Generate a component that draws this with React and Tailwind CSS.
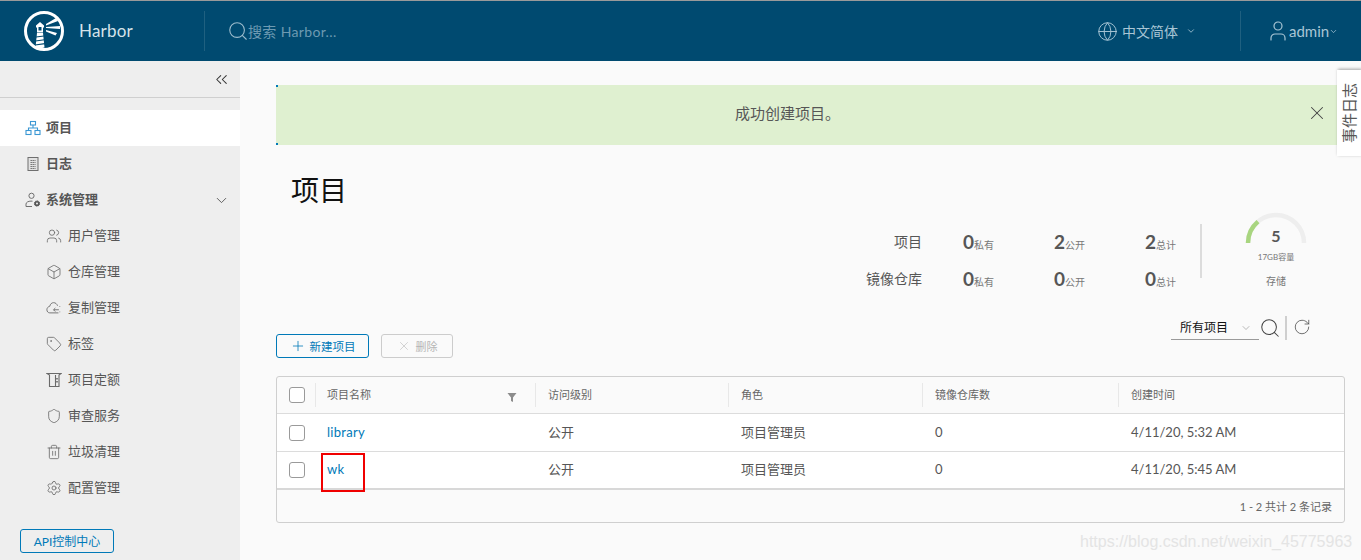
import { Users, Box, Tag, Shield, Trash2, Settings, Globe, User, Search, RotateCw, Plus, X, ChevronDown, ChevronsLeft } from 'lucide-react';

const FONT = "font-['Lato','Noto_Sans_CJK_SC',sans-serif]";

const HarborLogo = () => (
  <svg width="40" height="40" viewBox="0 0 40 40">
    <circle cx="20" cy="20" r="18.5" fill="none" stroke="#fff" strokeWidth="3" />
    <path d="M12 14.5l4-3.5 4 3.5v2h-1v5h-6v-5h-1z" fill="#fff" />
    <rect x="14.5" y="16" width="3" height="3.5" fill="#004a70" />
    <path d="M13 22h6l1.5 14.5-4.5 1-4.5-1z" fill="#fff" />
    <path d="M12 26l8-1M11.5 30l9-1.2M11 34l10-1.4" stroke="#004a70" strokeWidth="1.1" />
    <path d="M22 13l10-6 2 3-12 4.5zM22 16l14-1v3l-14-1zM22 19l11 3-1.5 2.5-9.5-4z" fill="#fff" />
  </svg>
);

const NetworkIcon = () => (
  <svg width="16" height="16" viewBox="0 0 16 16" fill="none" stroke="#3b97d3" strokeWidth="1.1">
    <rect x="5.5" y="1.5" width="5" height="3.5" />
    <rect x="1" y="10.5" width="5" height="4" />
    <rect x="10" y="10.5" width="5" height="4" />
    <path d="M8 5v3M3.5 10.5V8h9v2.5" />
  </svg>
);

const LogIcon = () => (
  <svg width="16" height="16" viewBox="0 0 16 16" fill="none" stroke="#6f6f6f">
    <rect x="3" y="1.5" width="10" height="13" fill="#e2e2e2" />
    <path d="M5.5 4.5h5M5.5 6.5h5M5.5 8.5h5M5.5 10.5h5M5.5 12.5h5" strokeDasharray="1.4 .6" />
  </svg>
);

const AdminIcon = () => (
  <svg width="16" height="16" viewBox="0 0 16 16" fill="none" stroke="#6f6f6f" strokeWidth="1">
    <circle cx="6.5" cy="3.8" r="2.6" />
    <path d="M1 14.5v-2.4c0-1.8 2.4-3 5-3 .6 0 1 0 1.5.1M1 14.5h6" />
    <circle cx="12" cy="11.5" r="2.6" fill="#555" stroke="#555" strokeDasharray="1.4 .6" />
    <circle cx="12" cy="11.5" r="1" fill="#eee" stroke="none" />
  </svg>
);

const CloudIcon = () => (
  <svg width="18" height="16" viewBox="0 0 18 16" fill="none" stroke="#6a6a6a" strokeWidth="1">
    <path d="M13 5.5C12.3 3.4 10.6 2 8.6 2 6.4 2 4.6 3.7 4.3 6 2.4 6.4 1 8 1 10c0 2 1.4 3.5 3.3 3.5H14" />
    <path d="M14.5 10H8.5M10.5 8L8.5 10l2 2M15.5 6v.8M15.5 12v.8" />
  </svg>
);

const QuotaIcon = () => (
  <svg width="16" height="16" viewBox="0 0 16 16" fill="none" stroke="#6a6a6a" strokeWidth="1.1">
    <path d="M1 1.5h14l-2 1.5v11.5H3.5V3z" />
    <path d="M9.5 3v11.5" />
    <path d="M11 6v1.5M11 9v1.5" strokeWidth="1.6" />
  </svg>
);

const thin = { strokeWidth: 1.25, color: '#6a6a6a' };

const subItems = [
  ['用户管理', <Users size={16} {...thin} />],
  ['仓库管理', <Box size={16} {...thin} />],
  ['复制管理', <CloudIcon />],
  ['标签', <Tag size={16} {...thin} />],
  ['项目定额', <QuotaIcon />],
  ['审查服务', <Shield size={16} {...thin} />],
  ['垃圾清理', <Trash2 size={16} {...thin} />],
  ['配置管理', <Settings size={16} {...thin} />],
];

const Stat = ({ value, label }) => (
  <span className="flex items-baseline w-[91px] text-[#565656]">
    <span className="text-[19px] leading-none font-bold">{value}</span>
    <span className="text-[10px] leading-none text-[#777]">{label}</span>
  </span>
);

const StatRow = ({ title, values }) => (
  <div className="flex items-center h-[37px]">
    <span className="w-[91px] text-right text-[14px] text-[#565656] mr-[41px]">{title}</span>
    <Stat value={values[0]} label="私有" />
    <Stat value={values[1]} label="公开" />
    <span className="w-[54px]"><Stat value={values[2]} label="总计" /></span>
  </div>
);

const rowGrid = 'grid grid-cols-[38px_220px_193px_194px_196px_1fr] items-center';

const Checkbox = () => (
  <span className="block ml-[12px] w-4 h-4 rounded-[3px] border border-[#9a9a9a] bg-white" />
);

const HeadCell = ({ children, extra }) => (
  <div className="flex items-center justify-between h-[24px] border-l border-[#e8e8e8] pl-[12px] pr-[18px] text-[11px] text-[#666]">
    {children}
    {extra}
  </div>
);

const Row = ({ name, time, border }) => (
  <div className={`${rowGrid} h-[38px] bg-white text-[13px] text-[#565656] ${border}`}>
    <Checkbox />
    <a className="pl-[12px] text-[#0079b8] tracking-[0.3px]">{name}</a>
    <span className="pl-[13px]">公开</span>
    <span className="pl-[13px]">项目管理员</span>
    <span className="pl-[13px]">0</span>
    <span className="pl-[13px]">{time}</span>
  </div>
);

export default function App() {
  return (
    <div className={`relative w-[1361px] h-[560px] overflow-hidden flex flex-col bg-[#fafafa] ${FONT}`}>
      <header className="flex items-center h-[61px] shrink-0 bg-[#004a70] border-t border-[#9a9a9a]">
        <div className="flex items-center w-[205px] h-[40px] pl-[24px] border-r border-[#1f6080]">
          <HarborLogo />
          <span className="ml-[15px] text-[17px] tracking-[0.2px] text-[#d5e3ea]">Harbor</span>
        </div>
        <div className="flex items-center ml-[22px] flex-1 text-[14px] tracking-[0.35px] text-[#6d9ab2]">
          <Search size={22} strokeWidth={1.2} className="-mr-[1px] text-[#9cbccd]" />
          <span>搜索 Harbor...</span>
        </div>
        <div className="flex items-center text-[14px] text-[#a9c6d5] h-[40px] mr-[44px]">
          <Globe size={21} strokeWidth={1.1} />
          <span className="ml-[4px]">中文简体</span>
          <ChevronDown size={10} className="ml-[8px]" />
        </div>
        <div className="flex items-center h-[40px] w-[121px] pl-[25px] border-l border-[#1f6080] text-[15px] text-[#a9c6d5]">
          <User size={24} strokeWidth={1.2} />
          <span className="-ml-[1px]">admin</span>
          <ChevronDown size={9} />
        </div>
      </header>

      <div className="flex flex-1 min-h-0">
        <aside className="w-[240px] shrink-0 bg-[#eeeeee] flex flex-col">
          <div className="flex items-center justify-end h-[37px] pr-[9px] border-b border-[#cfcfcf] text-[#333] shrink-0">
            <ChevronsLeft size={19} strokeWidth={1.3} />
          </div>
          <nav className="mt-[12px] flex flex-col text-[13px] text-[#565656]">
            <div className="flex items-center h-[36px] pl-[25px] gap-[5px] bg-white font-bold">
              <NetworkIcon />项目
            </div>
            <div className="flex items-center h-[36px] pl-[25px] gap-[5px] font-bold">
              <LogIcon />日志
            </div>
            <div className="flex items-center h-[36px] pl-[25px] pr-[10px] gap-[5px] font-bold">
              <AdminIcon />系统管理
              <ChevronDown size={17} strokeWidth={1.3} className="ml-auto" />
            </div>
            {subItems.map(([label, icon]) => (
              <div key={label} className="flex items-center h-[36px] pl-[46px] gap-[6px]">
                <span className="w-4 flex justify-center">{icon}</span>
                {label}
              </div>
            ))}
          </nav>
          <button className="mt-[23px] ml-[20px] w-[94px] h-[24px] pt-[1px] rounded-[3px] border border-[#0079b8] text-[12px] text-[#0079b8]">
            API控制中心
          </button>
        </aside>

        <main className="flex-1 pl-[36px] pr-[16px] pt-[24px] min-w-0">
          <div className="flex items-center justify-center relative h-[60px] pr-[46px] pb-[3px] bg-[#dff0d0] text-[15px] text-[#565656]">
            <span className="absolute left-0 top-0 w-[2px] h-[2px] bg-[#0079b8]" />
            <span className="absolute left-0 bottom-0 w-[2px] h-[2px] bg-[#0079b8]" />
            成功创建项目。
            <X size={22} strokeWidth={1.1} className="absolute right-[17px] top-[17px] text-[#444]" />
          </div>

          <h1 className="mt-[27px] ml-[15px] text-[28px] leading-[36px] text-[#111]">项目</h1>

          <div className="flex justify-end items-start -mt-[2px] h-[108px]">
            <div className="flex flex-col pt-[17px]">
              <StatRow title="项目" values={['0', '2', '2']} />
              <StatRow title="镜像仓库" values={['0', '0', '0']} />
            </div>
            <div className="w-[2px] h-[54px] mt-[18px] ml-[1px] bg-[#dcdcdc]" />
            <div className="ml-[43px] mr-[38px] w-[62px] flex flex-col items-center relative">
              <svg width="62" height="32" viewBox="0 0 62 32" className="mt-[6px]">
                <path d="M3 31a28 28 0 0 1 56 0" fill="none" stroke="#eeeeee" strokeWidth="4.5" />
                <path d="M3 31a28 28 0 0 1 10-21.4" fill="none" stroke="#a8d57f" strokeWidth="4.5" />
              </svg>
              <span className="absolute top-[22px] text-[16px] leading-none font-bold text-[#565656]">5</span>
              <span className="mt-[7px] text-[8px] leading-[12px] text-[#777] whitespace-nowrap">17GB容量</span>
              <span className="mt-[11px] text-[10px] leading-[14px] text-[#777]">存储</span>
            </div>
          </div>

          <div className="flex justify-between mt-[2px] h-[42px]">
            <div className="flex items-end gap-[12px]">
              <button className="flex items-center justify-center gap-[4px] w-[93px] h-[24px] rounded-[3px] border border-[#0079b8] text-[11.5px] text-[#0079b8]">
                <Plus size={16} strokeWidth={1.2} />
                <span className="pt-[2px]">新建项目</span>
              </button>
              <button className="flex items-center justify-center gap-[5px] w-[72px] h-[24px] rounded-[3px] border border-[#cccccc] text-[11px] text-[#b5b5b5]">
                <X size={14} strokeWidth={1} />
                <span className="pt-[2px]">删除</span>
              </button>
            </div>
            <div className="flex items-start mr-[34px]">
              <div className="flex items-center justify-between w-[88px] h-[24px] pl-[9px] pr-[7px] border-b border-[#9a9a9a] text-[12px] text-[#111]">
                所有项目
                <ChevronDown size={12} strokeWidth={1} className="text-[#777]" />
              </div>
              <Search size={22} strokeWidth={1.1} className="mt-[1px] text-[#444]" />
              <span className="w-[2px] h-[24px] ml-[4px] bg-[#cfcfcf]" />
              <RotateCw size={18} strokeWidth={1} className="ml-[6px] mt-[2px] text-[#444]" />
            </div>
          </div>

          <div className="mt-[18px] h-[147px] rounded-[3px] border border-[#cfcfcf] bg-[#fafafa] overflow-hidden">
            <div className={`${rowGrid} h-[37px] border-b border-[#dcdcdc]`}>
              <Checkbox />
              <HeadCell extra={<svg width="10" height="10" viewBox="0 0 10 10" className="mt-[3px]"><path d="M.5 1h9L6 5.5V10L4 9V5.5z" fill="#8c8c8c" /></svg>}>
                <span className="-ml-[1px]">项目名称</span>
              </HeadCell>
              <HeadCell>访问级别</HeadCell>
              <HeadCell>角色</HeadCell>
              <HeadCell>镜像仓库数</HeadCell>
              <HeadCell>创建时间</HeadCell>
            </div>
            <Row name="library" time="4/11/20, 5:32 AM" border="border-b border-[#dcdcdc]" />
            <Row name="wk" time="4/11/20, 5:45 AM" border="border-b-2 border-[#d8d8d8]" />
            <div className="flex items-center justify-end h-[33px] pt-[2px] pr-[12px] text-[11px] text-[#666]">
              1 - 2 共计 2 条记录
            </div>
          </div>
        </main>
      </div>

      {/* event log tab */}
      <div className="absolute left-[1337px] top-[70px] w-[24px] h-[86px] flex items-center justify-center bg-white shadow-[-1px_1px_3px_rgba(0,0,0,0.35)] text-[15px] text-[#565656] whitespace-nowrap [writing-mode:vertical-rl] [text-orientation:sideways] rotate-180">
        事件日志
      </div>

      {/* annotation from the screenshot */}
      <div className="absolute left-[321px] top-[453px] w-[44px] h-[39px] border-2 border-[#f00000]" />

      <div className="absolute left-[1080px] top-[532px] text-[16px] leading-5 text-[#e4e4e4] font-['Liberation_Sans',sans-serif]">
        https://blog.csdn.net/weixin_45775963
      </div>
    </div>
  );
}
